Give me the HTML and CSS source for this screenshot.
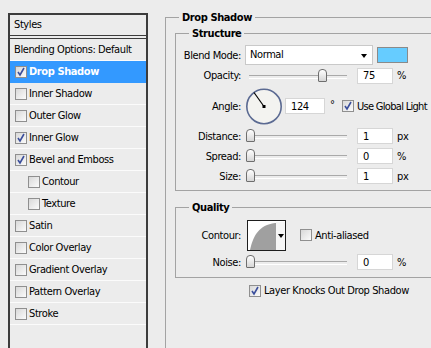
FILE: index.html
```html
<!DOCTYPE html>
<html lang="en">
<head>
    <meta charset="UTF-8">
    <title>Layer Style - Drop Shadow</title>
    <link rel="stylesheet" href="styles.css">
</head>
<body>
<div class="dialog">
    <!-- Styles list -->
    <div class="styles-panel">
        <div class="panel-head">Styles</div>
        <ul class="style-list">
            <li class="plain">Blending Options: Default</li>
            <li class="selected"><span class="cb checked"><svg width="10" height="10" viewBox="0 0 10 10"><path d="M2 5 L4 8 L8 1" fill="none" stroke="#3a4e9c" stroke-width="1.6"/></svg></span>Drop Shadow</li>
            <li><span class="cb"></span>Inner Shadow</li>
            <li><span class="cb"></span>Outer Glow</li>
            <li><span class="cb checked"><svg width="10" height="10" viewBox="0 0 10 10"><path d="M2 5 L4 8 L8 1" fill="none" stroke="#3a4e9c" stroke-width="1.6"/></svg></span>Inner Glow</li>
            <li><span class="cb checked"><svg width="10" height="10" viewBox="0 0 10 10"><path d="M2 5 L4 8 L8 1" fill="none" stroke="#3a4e9c" stroke-width="1.6"/></svg></span>Bevel and Emboss</li>
            <li class="sub"><span class="cb"></span>Contour</li>
            <li class="sub"><span class="cb"></span>Texture</li>
            <li><span class="cb"></span>Satin</li>
            <li><span class="cb"></span>Color Overlay</li>
            <li><span class="cb"></span>Gradient Overlay</li>
            <li><span class="cb"></span>Pattern Overlay</li>
            <li><span class="cb"></span>Stroke</li>
        </ul>
    </div>

    <!-- Drop shadow settings -->
    <div class="settings">
        <fieldset class="group outer">
            <legend>Drop Shadow</legend>

            <fieldset class="group">
                <legend>Structure</legend>
                <div class="fields structure">
                    <div class="field">
                        <span class="label">Blend Mode:</span>
                        <div class="select">Normal<span class="arrow"></span></div>
                        <span class="swatch"></span>
                    </div>
                    <div class="field">
                        <span class="label">Opacity:</span>
                        <div class="slider"><span class="thumb" style="left: 73px"></span></div>
                        <input class="num" type="text" value="75">
                        <span class="unit">%</span>
                    </div>
                    <div class="field">
                        <span class="label">Angle:</span>
                        <svg class="dial" width="38" height="37" viewBox="0 0 38 37">
                            <circle cx="19" cy="18.5" r="17.2" fill="#f3f3f0" stroke="#5b6a92" stroke-width="1.6"/>
                            <line x1="19" y1="18.5" x2="9" y2="4.5" stroke="#000" stroke-width="1.2"/>
                            <rect x="17.5" y="17" width="3" height="3" fill="#000"/>
                        </svg>
                        <input class="num wide" type="text" value="124">
                        <span class="deg">°</span>
                        <span class="cb checked"><svg width="10" height="10" viewBox="0 0 10 10"><path d="M2 5 L4 8 L8 1" fill="none" stroke="#3a4e9c" stroke-width="1.6"/></svg></span>
                        <span class="cb-text global">Use Global Light</span>
                    </div>
                    <div class="field">
                        <span class="label">Distance:</span>
                        <div class="slider"><span class="thumb" style="left: 1px"></span></div>
                        <input class="num" type="text" value="1">
                        <span class="unit">px</span>
                    </div>
                    <div class="field">
                        <span class="label">Spread:</span>
                        <div class="slider"><span class="thumb" style="left: 1px"></span></div>
                        <input class="num" type="text" value="0">
                        <span class="unit">%</span>
                    </div>
                    <div class="field">
                        <span class="label">Size:</span>
                        <div class="slider"><span class="thumb" style="left: 1px"></span></div>
                        <input class="num" type="text" value="1">
                        <span class="unit">px</span>
                    </div>
                </div>
            </fieldset>

            <fieldset class="group quality">
                <legend>Quality</legend>
                <div class="fields quality-fields">
                    <div class="field">
                        <span class="label">Contour:</span>
                        <div class="contour">
                            <svg width="28" height="28" viewBox="0 0 28 28"><path d="M2 28 C 5 14, 11 3, 27 1 L 28 1 L 28 28 Z" fill="#a0a0a0"/></svg>
                            <span class="contour-drop"><span class="arrow"></span></span>
                        </div>
                        <span class="cb aa"></span>
                        <span class="cb-text">Anti-aliased</span>
                    </div>
                    <div class="field">
                        <span class="label">Noise:</span>
                        <div class="slider"><span class="thumb" style="left: 1px"></span></div>
                        <input class="num" type="text" value="0">
                        <span class="unit">%</span>
                    </div>
                </div>
            </fieldset>

            <div class="knockout">
                <span class="cb checked"><svg width="10" height="10" viewBox="0 0 10 10"><path d="M2 5 L4 8 L8 1" fill="none" stroke="#3a4e9c" stroke-width="1.6"/></svg></span>
                <span class="cb-text">Layer Knocks Out Drop Shadow</span>
            </div>
        </fieldset>
    </div>
</div>
</body>
</html>
```

FILE: styles.css
```css
* {
    box-sizing: border-box;
}
body {
    margin: 0;
    width: 431px;
    height: 348px;
    overflow: hidden;
    background-color: #ececec;
    font-family: "DejaVu Sans Condensed", "Liberation Sans", sans-serif;
    font-size: 11px;
    letter-spacing: -0.4px;
    color: #000;
}
.dialog {
    display: flex;
    align-items: flex-start;
}

/* left list */
.styles-panel {
    flex: none;
    width: 140px;
    height: 360px;
    margin: 13px 0 0 8px;
    border: 2px solid #3c3c3c;
    border-bottom: none;
}
.panel-head {
    height: 21px;
    line-height: 20px;
    padding-left: 4px;
    border-bottom: 1px solid #3c3c3c;
}
.style-list {
    list-style: none;
    margin: 2px 0 0;
    padding: 0;
    border-top: 1px solid #3c3c3c;
}
.style-list li {
    display: flex;
    align-items: center;
    height: 22px;
    padding-left: 5px;
    border-bottom: 1px solid #fbfbfb;
}
.style-list li.plain {
    padding-left: 4px;
}
.style-list li.sub {
    padding-left: 18px;
}
.style-list li.selected {
    background-color: #3399ff;
    color: #fff;
    font-weight: bold;
    border-bottom-color: #3399ff;
}
.style-list .cb {
    margin-right: 2px;
}

/* checkbox */
.cb {
    flex: none;
    display: inline-flex;
    align-items: center;
    justify-content: center;
    width: 12px;
    height: 12px;
    border: 1px solid #8f8f8f;
    background: linear-gradient(135deg, #d8d8d8, #fbfbfb);
}
.cb-text {
    margin-left: 3px;
    white-space: nowrap;
}
.cb-text.global {
    letter-spacing: -0.7px;
}

/* right side */
.settings {
    flex: none;
}
.group {
    margin: 0;
    padding: 0 0 4px;
    border: 1px solid #a3a3a3;
    min-width: 0;
}
.group legend {
    margin-left: 13px;
    padding: 0 3px;
    line-height: 13px;
    font-weight: bold;
}
.group.outer {
    width: 300px;
    height: 400px;
    margin: 11px 0 0 17px;
    padding: 3px 0 0 9px;
}
.group.outer > legend {
    margin-left: 4px;
}
.group.quality {
    margin-top: 10px;
}
.fields {
    display: grid;
}
.structure {
    margin-top: 5px;
    grid-template-rows: 20px 21px 40px 20px 20px 20px;
}
.quality-fields {
    margin-top: 5px;
    grid-template-rows: 32px 22px;
}
.field {
    display: flex;
    align-items: center;
}
.field .label {
    flex: none;
    width: 65px;
    margin-right: 4px;
    text-align: right;
}

.select {
    position: relative;
    width: 128px;
    height: 20px;
    line-height: 18px;
    padding-left: 4px;
    background: #fff;
    border: 1px solid #c9c9c9;
}
.arrow {
    width: 0;
    height: 0;
    border-left: 3px solid transparent;
    border-right: 3px solid transparent;
    border-top: 4px solid #000;
}
.select .arrow {
    position: absolute;
    right: 5px;
    top: 8px;
}
.swatch {
    width: 31px;
    height: 16px;
    margin-left: 4px;
    background-color: #66ccff;
    border: 1px solid #8a8a8a;
}

.slider {
    position: relative;
    flex: none;
    width: 106px;
    height: 14px;
}
.slider::before {
    content: "";
    position: absolute;
    left: 4px;
    right: 4px;
    top: 6px;
    height: 2px;
    border-top: 1px solid #a9a9a9;
    border-bottom: 1px solid #fff;
}
.thumb {
    position: absolute;
    top: 0;
    width: 9px;
    height: 13px;
    border: 1px solid #6e6e6e;
    border-radius: 4px 4px 1px 1px;
    background: linear-gradient(#ffffff, #d6d6d6);
}

.num {
    width: 36px;
    height: 16px;
    margin: 0 0 0 6px;
    padding: 0 0 0 5px;
    border: 1px solid #d6d6d6;
    background: #fff;
    font: inherit;
    letter-spacing: inherit;
    color: #000;
    outline: none;
}
.num.wide {
    width: 40px;
    margin-left: 2px;
}
.unit {
    margin-left: 4px;
}
.deg {
    width: 17px;
    padding-left: 5px;
    margin-bottom: 3px;
}
.dial {
    flex: none;
}

.contour {
    display: flex;
    width: 39px;
    height: 31px;
    margin-left: 2px;
    background: #fff;
    border: 1px solid #1e1e1e;
    padding-top: 1px;
}
.contour svg {
    display: block;
}
.contour-drop {
    display: flex;
    align-items: center;
    justify-content: center;
    width: 9px;
    background: #f6f6f6;
}
.cb.aa {
    margin-left: 14px;
}

.knockout {
    display: flex;
    align-items: center;
    margin: 6px 0 0 74px;
}
```
